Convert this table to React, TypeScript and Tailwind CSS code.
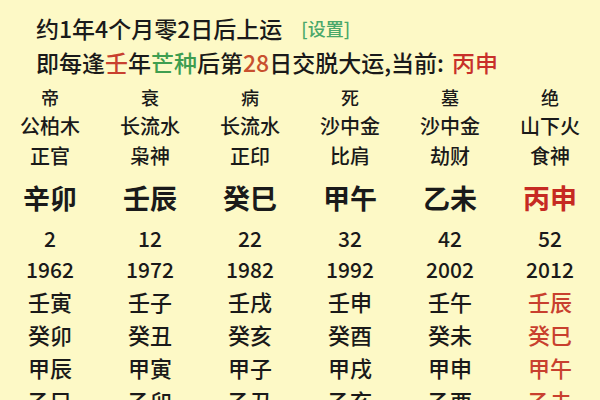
import React from "react";

const cols = [
  { a: "帝", b: "公柏木", c: "正官", d: "辛卯", n: "2", y: "1962", r: ["壬寅", "癸卯", "甲辰", "乙巳"], red: false },
  { a: "衰", b: "长流水", c: "枭神", d: "壬辰", n: "12", y: "1972", r: ["壬子", "癸丑", "甲寅", "乙卯"], red: false },
  { a: "病", b: "长流水", c: "正印", d: "癸巳", n: "22", y: "1982", r: ["壬戌", "癸亥", "甲子", "乙丑"], red: false },
  { a: "死", b: "沙中金", c: "比肩", d: "甲午", n: "32", y: "1992", r: ["壬申", "癸酉", "甲戌", "乙亥"], red: false },
  { a: "墓", b: "沙中金", c: "劫财", d: "乙未", n: "42", y: "2002", r: ["壬午", "癸未", "甲申", "乙酉"], red: false },
  { a: "绝", b: "山下火", c: "食神", d: "丙申", n: "52", y: "2012", r: ["壬辰", "癸巳", "甲午", "乙未"], red: true },
];

function Row({ h, cls, get }: { h: string; cls: string; get: (c: (typeof cols)[number]) => React.ReactNode; }) {
  return (
    <div className={`grid grid-cols-6 items-center shrink-0 ${h}`}>
      {cols.map((c, i) => (
        <div key={i} className={`text-center leading-none ${cls}`}>{get(c)}</div>
      ))}
    </div>
  );
}

export default function App() {
  return (
    <div
      className="w-[600px] h-[400px] overflow-hidden bg-[#fdf9c6] text-[#1a1a1a] font-medium flex flex-col"
      style={{ fontFamily: '"Noto Sans CJK SC", "Noto Sans", sans-serif' }}
    >
      <div className="h-[14px] shrink-0" />
      <div className="h-[28px] shrink-0 flex items-center pl-[36px] text-[23px] leading-none">
        <span>约1年4个月零2日后上运</span>
        <span className="ml-[19px] text-[18px] text-[#4aa86a]">[设置]</span>
      </div>
      <div className="h-[40px] shrink-0 flex items-center pl-[36px] text-[23px] leading-none">
        <span>即每逢</span>
        <span className="text-[#c8402e]">壬</span>
        <span>年</span>
        <span className="text-[#3f9e50]">芒种</span>
        <span>后第</span>
        <span className="text-[#c8502e]">28</span>
        <span>日交脱大运,当前: </span>
        <span className="text-[#c8302a] ml-[8px]">丙申</span>
      </div>
      <Row h="h-[30px]" cls="text-[18px]" get={(c) => c.a} />
      <Row h="h-[28px]" cls="text-[20px]" get={(c) => c.b} />
      <Row h="h-[32px]" cls="text-[20px]" get={(c) => c.c} />
      <Row h="h-[50px]" cls="text-[27px] font-bold" get={(c) => <span className={c.red ? "text-[#c62a22]" : ""}>{c.d}</span>} />
      <Row h="h-[32px]" cls="text-[21px]" get={(c) => c.n} />
      <Row h="h-[30px]" cls="text-[21px]" get={(c) => c.y} />
      {[0, 1, 2, 3].map((k) => (
        <Row key={k} h="h-[33px]" cls="text-[22px]" get={(c) => <span className={c.red ? "text-[#c8402e]" : ""}>{c.r[k]}</span>} />
      ))}
    </div>
  );
}
